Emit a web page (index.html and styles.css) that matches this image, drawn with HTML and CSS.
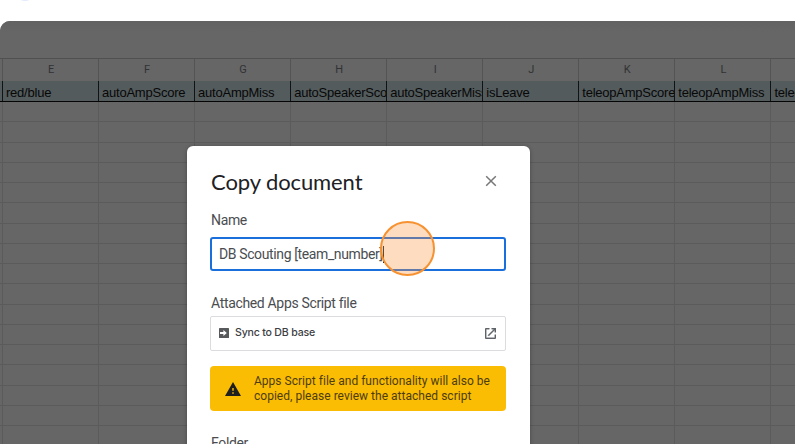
FILE: index.html
```html
<!DOCTYPE html>
<html lang="en">
<head>
<meta charset="utf-8">
<title>Copy document</title>
<link rel="stylesheet" href="styles.css">
</head>
<body>
<div class="page">
  <div class="peek"></div>
  <main class="sheet">
    <div class="toolbar"></div>
    <div class="row letters"><span class="stub"></span><span>E</span><span>F</span><span>G</span><span>H</span><span>I</span><span>J</span><span>K</span><span>L</span><span></span></div>
    <div class="row names"><span class="stub"></span><span>red/blue</span><span>autoAmpScore</span><span>autoAmpMiss</span><span>autoSpeakerScore</span><span>autoSpeakerMiss</span><span>isLeave</span><span>teleopAmpScore</span><span>teleopAmpMiss</span><span>teleopSpeaker</span></div>
    <div class="cells">
      <div class="row"><span class="stub"></span><span></span><span></span><span></span><span></span><span></span><span></span><span></span><span></span><span></span></div>
      <div class="row"><span class="stub"></span><span></span><span></span><span></span><span></span><span></span><span></span><span></span><span></span><span></span></div>
      <div class="row"><span class="stub"></span><span></span><span></span><span></span><span></span><span></span><span></span><span></span><span></span><span></span></div>
      <div class="row"><span class="stub"></span><span></span><span></span><span></span><span></span><span></span><span></span><span></span><span></span><span></span></div>
      <div class="row"><span class="stub"></span><span></span><span></span><span></span><span></span><span></span><span></span><span></span><span></span><span></span></div>
      <div class="row"><span class="stub"></span><span></span><span></span><span></span><span></span><span></span><span></span><span></span><span></span><span></span></div>
      <div class="row"><span class="stub"></span><span></span><span></span><span></span><span></span><span></span><span></span><span></span><span></span><span></span></div>
      <div class="row"><span class="stub"></span><span></span><span></span><span></span><span></span><span></span><span></span><span></span><span></span><span></span></div>
      <div class="row"><span class="stub"></span><span></span><span></span><span></span><span></span><span></span><span></span><span></span><span></span><span></span></div>
      <div class="row"><span class="stub"></span><span></span><span></span><span></span><span></span><span></span><span></span><span></span><span></span><span></span></div>
      <div class="row"><span class="stub"></span><span></span><span></span><span></span><span></span><span></span><span></span><span></span><span></span><span></span></div>
      <div class="row"><span class="stub"></span><span></span><span></span><span></span><span></span><span></span><span></span><span></span><span></span><span></span></div>
      <div class="row"><span class="stub"></span><span></span><span></span><span></span><span></span><span></span><span></span><span></span><span></span><span></span></div>
      <div class="row"><span class="stub"></span><span></span><span></span><span></span><span></span><span></span><span></span><span></span><span></span><span></span></div>
      <div class="row"><span class="stub"></span><span></span><span></span><span></span><span></span><span></span><span></span><span></span><span></span><span></span></div>
      <div class="row"><span class="stub"></span><span></span><span></span><span></span><span></span><span></span><span></span><span></span><span></span><span></span></div>
      <div class="row"><span class="stub"></span><span></span><span></span><span></span><span></span><span></span><span></span><span></span><span></span><span></span></div>
    </div>
  </main>
  <section class="dialog">
    <header class="head">
      <h1>Copy document</h1>
      <svg class="close" viewBox="0 0 12 12"><path d="M1.200 1.200l9.600 9.600M10.800 1.200l-9.600 9.600" fill="none" stroke="#777" stroke-width="1.500"/></svg>
    </header>
    <div class="label">Name</div>
    <div class="field"><span>DB Scouting [team_number]</span><i class="caret"></i></div>
    <div class="label attached">Attached Apps Script file</div>
    <div class="file">
      <svg class="script" viewBox="0 0 10 10"><rect width="10" height="10" rx=".6" fill="#58595b"/><path d="M1 4.100h3.400V2.100L7.800 5 4.400 7.900V5.900H1z" fill="#fff"/></svg>
      <span>Sync to DB base</span>
      <svg class="open" viewBox="3 3 18 18"><path fill="#5f6368" stroke="#5f6368" stroke-width=".6" d="M19 19H5V5h5V3H5a2 2 0 0 0-2 2v14a2 2 0 0 0 2 2h14c1.100 0 2-.9 2-2v-5h-2v5zM14 3v2h3.590l-9.830 9.830 1.410 1.410L19 6.410V10h2V3h-7z"/></svg>
    </div>
    <div class="warning">
      <svg viewBox="1 2 22 19"><path fill="#1f1f1f" d="M1 21h22L12 2 1 21zm12-3h-2v-2h2v2zm0-4h-2v-4h2v4z"/></svg>
      <p>Apps Script file and functionality will also be<br>copied, please review the attached script</p>
    </div>
    <div class="label folder">Folder</div>
  </section>
  <div class="pointer"></div>
</div>
</body>
</html>
```
FILE: styles.css
```css
* { box-sizing: border-box; }
body { margin: 0; background: #fff; font-family: Roboto, "Liberation Sans", sans-serif; }
.page { position: relative; display: flow-root; width: 795px; height: 444px; overflow: hidden; }
.peek { position: absolute; left: 15px; top: -19px; width: 20px; height: 20px; border-radius: 50%; background: #e3eafc; }
.sheet { height: 423px; margin-top: 21px; background: #666; border-radius: 10px 0 0 0; overflow: hidden; }
.toolbar { height: 38px; border-bottom: 1px solid #505050; background: linear-gradient(#626262, #666 12px); }
.row { display: flex; width: 900px; height: 20.25px; border-bottom: 1px solid #5b5b5b; }
.row span { flex: none; width: 96.06px; border-right: 1px solid #5b5b5b; white-space: nowrap; overflow: hidden; }
.row .stub { width: 3px; padding: 0; }
.letters { height: 22px; border-bottom: 0; }
.letters span { border-color: #545454; padding-left: 1px; text-align: center; font-size: 11px; line-height: 22px; color: #303234; }
.names { height: 21px; background: #535b5d; border-bottom: 1px solid #050505; }
.names span { padding-left: 3px; border-color: #101414; font: 13px/23px "Liberation Sans", Arial, sans-serif; letter-spacing: -.23px; color: #080808; }
.dialog { position: absolute; left: 187px; top: 146px; width: 343px; height: 320px; padding: 24px 24px 0; background: #fff; border-radius: 6px; color: #3c4043; box-shadow: 0 1px 4px rgba(0,0,0,.3); }
.head { display: flex; justify-content: space-between; height: 40px; }
h1 { margin: 0; font: 400 22px/23px Lato, sans-serif; letter-spacing: -.1px; color: #202124; }
.close { width: 12px; height: 12px; margin: 5px 9px 0 0; }
.label { height: 27px; font-size: 14px; line-height: 20px; letter-spacing: -.34px; color: #4a4d50; }
.field { display: flex; align-items: center; width: 296px; height: 34px; margin-left: -1px; padding-left: 7px; border: 2px solid #1b6fdc; border-radius: 3px; font-size: 14px; letter-spacing: -.38px; color: #4a4d50; }
.caret { width: 1px; height: 17px; background: #222; }
.attached { height: 23px; margin-top: 22px; }
.file { display: flex; align-items: center; width: 296px; height: 35px; margin-left: -1px; padding: 0 9px 1px 8px; border: 1px solid #dadce0; border-radius: 2px; font: 500 10.6px/16px Inter, sans-serif; color: #3c4043; }
.file span { flex: 1; margin: 0 0 0 6px; letter-spacing: -.2px; }
.script { width: 10px; height: 10px; }
.open { width: 11px; height: 11px; }
.warning { display: flex; align-items: center; width: 296px; height: 45px; margin: 15px 0 0 -1px; padding-left: 15px; border-radius: 4px; background: #fbbc04; }
.warning svg { width: 16px; height: 14px; }
.warning p { margin: 0 0 0 13px; font-size: 12px; line-height: 15px; letter-spacing: .02px; color: #4d3d0d; white-space: nowrap; }
.folder { margin-top: 22px; }
.pointer { position: absolute; left: 380px; top: 221px; width: 55px; height: 55px; border: 2px solid #f69231; border-radius: 50%; background: rgba(251,146,60,.32); }
```
